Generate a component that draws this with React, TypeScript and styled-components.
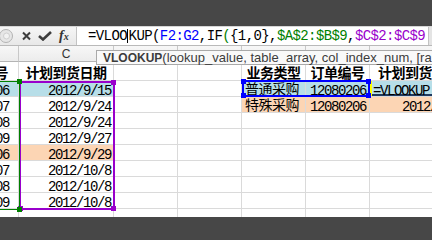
import React from "react";
import styled, { createGlobalStyle, css } from "styled-components";

const MONO = `"Liberation Mono", "DejaVu Sans Mono", monospace`;
const CJK = `"Noto Sans CJK SC", "Liberation Sans", sans-serif`;
const UI = `"Liberation Sans", Arial, sans-serif`;

const BLUE = "#b7dee8";
const ORANGE = "#fcd5b4";
const GRID = "#dadada";
const PURPLE = "#9900cc";
const GREEN = "#008000";
const RANGE_BLUE = "#0000ff";

const GlobalStyle = createGlobalStyle`
  html, body {
    margin: 0;
    padding: 0;
    background: #474747;
  }
  body {
    font-family: ${UI};
  }
`;

const Page = styled.div`
  width: 432px;
  height: 240px;
  overflow: hidden;
  display: flex;
  flex-direction: column;
  background: #474747;
`;

const DarkBar = styled.div<{ $h: number }>`
  flex: none;
  height: ${(p) => p.$h}px;
  background: #474747;
`;

const FormulaBar = styled.div`
  flex: none;
  height: 20px;
  box-sizing: border-box;
  display: flex;
  border-top: 1px solid #d6d6d6;
  border-bottom: 1px solid #b9b9b9;
  background: linear-gradient(#f6f6f6, #e8e8e8);
`;

const Controls = styled.div`
  width: 76px;
  flex: none;
  display: flex;
  align-items: center;
`;

const Knob = styled.svg`
  width: 14px;
  height: 18px;
  flex: none;
`;

const IconBtn = styled.svg<{ $ml: number; $w: number }>`
  flex: none;
  margin-left: ${(p) => p.$ml}px;
  width: ${(p) => p.$w}px;
  height: 10px;
`;

const Fx = styled.span`
  margin-left: 7px;
  font-family: "Liberation Serif", serif;
  font-style: italic;
  font-weight: 700;
  font-size: 14px;
  line-height: 14px;
  color: #333;
  small {
    font-size: 10px;
  }
`;

const FormulaInput = styled.div`
  flex: 1;
  min-width: 0;
  background: #fff;
  border-left: 1px solid #c3c3c3;
  border-right: 1px solid #c3c3c3;
  padding-left: 11px;
  overflow: hidden;
  white-space: nowrap;
  font-family: ${MONO};
  font-size: 14px;
  letter-spacing: -0.6px;
  line-height: 18px;
  color: #000;
`;

const Tok = styled.span<{ $c: string }>`
  color: ${(p) => p.$c};
`;

const Caret = styled.span`
  display: inline-block;
  width: 0;
  height: 14px;
  vertical-align: -3px;
  border-left: 1px solid #000;
  margin-right: 0.6px;
`;

const ExpandStrip = styled.div`
  width: 3px;
  flex: none;
  background: #e4e4e4;
`;

const Sheet = styled.div`
  flex: 1;
  min-height: 0;
  position: relative;
  overflow: hidden;
  background: #fff;
`;

const gridTemplate = css`
  display: grid;
  grid-template-columns: 19px 95px 64px 64px 64px 64px 98px;
  grid-template-rows: 16px 19px repeat(9, 16px);
  width: max-content;
`;

const Grid = styled.div`
  ${gridTemplate}
`;

/* same tracks as the sheet, laid over it, so range boxes sit on grid lines */
const RangeLayer = styled.div`
  ${gridTemplate}
  position: absolute;
  top: 0;
  left: 0;
  pointer-events: none;
`;

const ColHead = styled.div`
  box-sizing: border-box;
  border-right: 1px solid #c8c8c8;
  border-bottom: 1px solid #b4b4b4;
  background: linear-gradient(#f7f7f7, #ececec);
  text-align: center;
  font-family: ${UI};
  font-size: 12px;
  line-height: 15px;
  padding-top: 1px;
  color: #333;
`;

type Align = "left" | "right" | "center";

const Cell = styled.div<{
  $bg?: string;
  $align?: Align;
  $cjk?: boolean;
  $bold?: boolean;
  $pl?: number;
  $pr?: number;
  $active?: boolean;
}>`
  box-sizing: border-box;
  border-right: 1px solid ${GRID};
  border-bottom: 1px solid ${GRID};
  background: ${(p) => p.$bg ?? "#fff"};
  display: flex;
  align-items: flex-end;
  justify-content: ${(p) =>
    p.$align === "right" ? "flex-end" : p.$align === "center" ? "center" : "flex-start"};
  padding: 0 ${(p) => p.$pr ?? 3}px 0 ${(p) => p.$pl ?? 3}px;
  overflow: hidden;
  white-space: nowrap;
  font-family: ${(p) => (p.$cjk ? CJK : MONO)};
  font-size: 14px;
  font-weight: ${(p) => (p.$bold ? 700 : 400)};
  letter-spacing: ${(p) => (p.$cjk ? "-0.5px" : "-1.4px")};
  line-height: ${(p) => (p.$cjk ? "15px" : "10px")};
  color: #000;
  ${(p) =>
    p.$active &&
    css`
      box-shadow: inset 2px 0 #ffff00, inset 0 -2px #1f3a5f;
    `}
`;

const Range = styled.div<{ $col: string; $row: string; $c: string; $t: number }>`
  grid-column: ${(p) => p.$col};
  grid-row: ${(p) => p.$row};
  position: relative;
  box-sizing: border-box;
  border: ${(p) => p.$t}px solid ${(p) => p.$c};
`;

type Corner = "tl" | "tr" | "bl" | "br";

const Handle = styled.i<{ $at: Corner; $c: string }>`
  position: absolute;
  width: 5px;
  height: 5px;
  background: ${(p) => p.$c};
  ${(p) => (p.$at[0] === "t" ? "top: -3px;" : "bottom: -3px;")}
  ${(p) => (p.$at[1] === "l" ? "left: -3px;" : "right: -3px;")}
`;

const Tooltip = styled.div`
  position: absolute;
  left: 96px;
  top: 4px;
  width: 360px;
  height: 15px;
  box-sizing: border-box;
  border: 1px solid #a9a9a9;
  background: #f9f9f9;
  padding-left: 6px;
  font-family: ${UI};
  font-size: 13px;
  line-height: 13px;
  white-space: nowrap;
  color: #3c3c3c;
  b {
    font-size: 12px;
    font-weight: 700;
  }
`;

type Spec = {
  t?: string;
  bg?: string;
  align?: Align;
  cjk?: boolean;
  bold?: boolean;
  pl?: number;
  pr?: number;
  active?: boolean;
};

const headerRow: Spec[] = [
  { t: "号", cjk: true, bold: true, align: "right", pr: 10 },
  { t: "计划到货日期", cjk: true, bold: true, align: "center" },
  {},
  {},
  { t: "业务类型", cjk: true, bold: true, align: "center" },
  { t: "订单编号", cjk: true, bold: true, align: "center" },
  { t: "计划到货日期", cjk: true, bold: true, align: "center" },
];

const leftData: [string, string, string?][] = [
  ["06", "2012/9/15", BLUE],
  ["07", "2012/9/24"],
  ["08", "2012/9/24"],
  ["09", "2012/9/27"],
  ["06", "2012/9/29", ORANGE],
  ["07", "2012/10/8"],
  ["08", "2012/10/8"],
  ["09", "2012/10/8"],
  ["", ""],
];

const rightData: [string, string, Spec, string][] = [
  ["普通采购", "12080206", { t: "=VLOOKUP", pl: 3, active: true }, BLUE],
  ["特殊采购", "12080206", { t: "2012/9/29", align: "right", pr: 2 }, ORANGE],
];

const bodyRows: Spec[][] = leftData.map(([tail, date, bg], i) => {
  const r = rightData[i];
  return [
    { t: tail, bg, align: "right", pr: 9 },
    { t: date, bg, align: "right", pr: 2 },
    {},
    {},
    r ? { t: r[0], bg: r[3], cjk: true, pl: 3 } : {},
    r ? { t: r[1], bg: r[3], pl: 4 } : {},
    r ? { ...r[2], bg: r[3] } : {},
  ];
});

// only column C's letter shows; the others sit under the function tooltip
const columns = ["", "C", "", "", "", "", ""];

const renderCell = (s: Spec, key: string) => (
  <Cell
    key={key}
    $bg={s.bg}
    $align={s.align}
    $cjk={s.cjk}
    $bold={s.bold}
    $pl={s.pl}
    $pr={s.pr}
    $active={s.active}
  >
    {s.t}
  </Cell>
);

const PurpleRange = styled(Range)`
  margin-right: -1px;
  margin-bottom: -1px;
`;

const GreenRange = styled(Range)`
  margin-left: -10px;
  margin-right: -1px;
  margin-bottom: -1px;
`;

const BlueRange = styled(Range)`
  margin-top: -1px;
`;

export default function App() {
  return (
    <Page>
      <GlobalStyle />
      <DarkBar $h={26} />
      <FormulaBar>
        <Controls>
          <Knob viewBox="0 0 14 18">
            <circle cx="6" cy="9" r="6.5" fill="#e6e6e6" stroke="#b3b3b3" />
            <circle cx="6.5" cy="9" r="3" fill="#f2f2f2" stroke="#cfcfcf" />
          </Knob>
          <IconBtn $ml={8} $w={9} viewBox="0 0 9 10">
            <path d="M1 1.5 L8 8.5 M8 1.5 L1 8.5" stroke="#3d3d3d" strokeWidth="2" fill="none" />
          </IconBtn>
          <IconBtn $ml={7} $w={14} viewBox="0 0 14 10">
            <path d="M1 5 L5 8.5 L13 1" stroke="#3d3d3d" strokeWidth="2.6" fill="none" />
          </IconBtn>
          <Fx>
            f<small>x</small>
          </Fx>
        </Controls>
        <FormulaInput>
          =VLOO
          <Caret />
          KUP(<Tok $c={RANGE_BLUE}>F2:G2</Tok>,IF<Tok $c={GREEN}>(</Tok>
          {"{1,0},"}
          <Tok $c={GREEN}>$A$2:$B$9</Tok>,<Tok $c={PURPLE}>$C$2:$C$9</Tok>
        </FormulaInput>
        <ExpandStrip />
      </FormulaBar>
      <Sheet>
        <Grid>
          {columns.map((c, i) => (
            <ColHead key={i}>{c}</ColHead>
          ))}
          {headerRow.map((s, i) => renderCell(s, `h${i}`))}
          {bodyRows.map((row, r) => row.map((s, c) => renderCell(s, `${r}-${c}`)))}
        </Grid>

        <RangeLayer>
          <PurpleRange $col="2 / 3" $row="3 / 11" $c={PURPLE} $t={2}>
            <Handle $at="tr" $c={PURPLE} />
            <Handle $at="br" $c={PURPLE} />
            <Handle $at="bl" $c={PURPLE} />
          </PurpleRange>
          <GreenRange $col="1 / 2" $row="3 / 11" $c={GREEN} $t={1}>
            <Handle $at="tr" $c={GREEN} />
            <Handle $at="br" $c={GREEN} />
          </GreenRange>
          <BlueRange $col="5 / 7" $row="3 / 4" $c={RANGE_BLUE} $t={2}>
            <Handle $at="tl" $c={RANGE_BLUE} />
            <Handle $at="bl" $c={RANGE_BLUE} />
            <Handle $at="tr" $c={RANGE_BLUE} />
            <Handle $at="br" $c={RANGE_BLUE} />
          </BlueRange>
        </RangeLayer>

        <Tooltip>
          <b>VLOOKUP</b>(lookup_value, table_array, col_index_num, [range_lookup])
        </Tooltip>
      </Sheet>
      <DarkBar $h={23} />
    </Page>
  );
}
